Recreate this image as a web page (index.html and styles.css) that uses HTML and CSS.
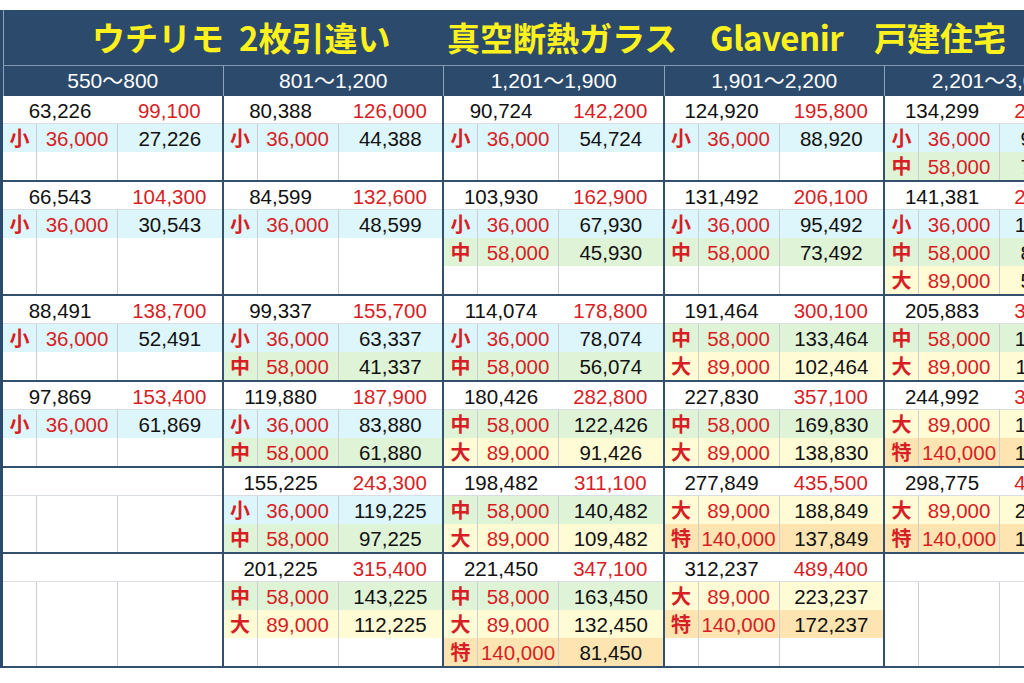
FILE: index.html
```html
<!DOCTYPE html>
<html lang="ja">
<head>
<meta charset="utf-8">
<title>ウチリモ 2枚引違い 真空断熱ガラス Glavenir 戸建住宅</title>
<link rel="stylesheet" href="styles.css">
</head>
<body>
<div class="sheet">
  <div class="title">
    <span class="t1">ウチリモ</span>
    <span class="t2">2枚引違い</span>
    <span class="t3">真空断熱ガラス</span>
    <span class="t4">Glavenir</span>
    <span class="t5">戸建住宅</span>
  </div>
  <div class="heads">
    <div>550～800</div>
    <div>801～1,200</div>
    <div>1,201～1,900</div>
    <div>1,901～2,200</div>
    <div>2,201～3,000</div>
  </div>

  <!-- band 1 -->
  <div class="band">
    <div class="blk">
      <div class="top"><span class="v">63,226</span><span class="p">99,100</span></div>
      <div class="r s"><span class="k">小</span><span class="a">36,000</span><span class="d">27,226</span></div>
      <div class="r"><span></span><span></span><span></span></div>
    </div>
    <div class="blk">
      <div class="top"><span class="v">80,388</span><span class="p">126,000</span></div>
      <div class="r s"><span class="k">小</span><span class="a">36,000</span><span class="d">44,388</span></div>
      <div class="r"><span></span><span></span><span></span></div>
    </div>
    <div class="blk">
      <div class="top"><span class="v">90,724</span><span class="p">142,200</span></div>
      <div class="r s"><span class="k">小</span><span class="a">36,000</span><span class="d">54,724</span></div>
      <div class="r"><span></span><span></span><span></span></div>
    </div>
    <div class="blk">
      <div class="top"><span class="v">124,920</span><span class="p">195,800</span></div>
      <div class="r s"><span class="k">小</span><span class="a">36,000</span><span class="d">88,920</span></div>
      <div class="r"><span></span><span></span><span></span></div>
    </div>
    <div class="blk">
      <div class="top"><span class="v">134,299</span><span class="p">210,500</span></div>
      <div class="r s"><span class="k">小</span><span class="a">36,000</span><span class="d">98,299</span></div>
      <div class="r m"><span class="k">中</span><span class="a">58,000</span><span class="d">76,299</span></div>
    </div>
  </div>

  <!-- band 2 -->
  <div class="band">
    <div class="blk">
      <div class="top"><span class="v">66,543</span><span class="p">104,300</span></div>
      <div class="r s"><span class="k">小</span><span class="a">36,000</span><span class="d">30,543</span></div>
      <div class="r"><span></span><span></span><span></span></div>
      <div class="r"><span></span><span></span><span></span></div>
    </div>
    <div class="blk">
      <div class="top"><span class="v">84,599</span><span class="p">132,600</span></div>
      <div class="r s"><span class="k">小</span><span class="a">36,000</span><span class="d">48,599</span></div>
      <div class="r"><span></span><span></span><span></span></div>
      <div class="r"><span></span><span></span><span></span></div>
    </div>
    <div class="blk">
      <div class="top"><span class="v">103,930</span><span class="p">162,900</span></div>
      <div class="r s"><span class="k">小</span><span class="a">36,000</span><span class="d">67,930</span></div>
      <div class="r m"><span class="k">中</span><span class="a">58,000</span><span class="d">45,930</span></div>
      <div class="r"><span></span><span></span><span></span></div>
    </div>
    <div class="blk">
      <div class="top"><span class="v">131,492</span><span class="p">206,100</span></div>
      <div class="r s"><span class="k">小</span><span class="a">36,000</span><span class="d">95,492</span></div>
      <div class="r m"><span class="k">中</span><span class="a">58,000</span><span class="d">73,492</span></div>
      <div class="r"><span></span><span></span><span></span></div>
    </div>
    <div class="blk">
      <div class="top"><span class="v">141,381</span><span class="p">221,600</span></div>
      <div class="r s"><span class="k">小</span><span class="a">36,000</span><span class="d">105,381</span></div>
      <div class="r m"><span class="k">中</span><span class="a">58,000</span><span class="d">83,381</span></div>
      <div class="r l"><span class="k">大</span><span class="a">89,000</span><span class="d">52,381</span></div>
    </div>
  </div>

  <!-- band 3 -->
  <div class="band">
    <div class="blk">
      <div class="top"><span class="v">88,491</span><span class="p">138,700</span></div>
      <div class="r s"><span class="k">小</span><span class="a">36,000</span><span class="d">52,491</span></div>
      <div class="r"><span></span><span></span><span></span></div>
    </div>
    <div class="blk">
      <div class="top"><span class="v">99,337</span><span class="p">155,700</span></div>
      <div class="r s"><span class="k">小</span><span class="a">36,000</span><span class="d">63,337</span></div>
      <div class="r m"><span class="k">中</span><span class="a">58,000</span><span class="d">41,337</span></div>
    </div>
    <div class="blk">
      <div class="top"><span class="v">114,074</span><span class="p">178,800</span></div>
      <div class="r s"><span class="k">小</span><span class="a">36,000</span><span class="d">78,074</span></div>
      <div class="r m"><span class="k">中</span><span class="a">58,000</span><span class="d">56,074</span></div>
    </div>
    <div class="blk">
      <div class="top"><span class="v">191,464</span><span class="p">300,100</span></div>
      <div class="r m"><span class="k">中</span><span class="a">58,000</span><span class="d">133,464</span></div>
      <div class="r l"><span class="k">大</span><span class="a">89,000</span><span class="d">102,464</span></div>
    </div>
    <div class="blk">
      <div class="top"><span class="v">205,883</span><span class="p">322,700</span></div>
      <div class="r m"><span class="k">中</span><span class="a">58,000</span><span class="d">147,883</span></div>
      <div class="r l"><span class="k">大</span><span class="a">89,000</span><span class="d">116,883</span></div>
    </div>
  </div>

  <!-- band 4 -->
  <div class="band">
    <div class="blk">
      <div class="top"><span class="v">97,869</span><span class="p">153,400</span></div>
      <div class="r s"><span class="k">小</span><span class="a">36,000</span><span class="d">61,869</span></div>
      <div class="r"><span></span><span></span><span></span></div>
    </div>
    <div class="blk">
      <div class="top"><span class="v">119,880</span><span class="p">187,900</span></div>
      <div class="r s"><span class="k">小</span><span class="a">36,000</span><span class="d">83,880</span></div>
      <div class="r m"><span class="k">中</span><span class="a">58,000</span><span class="d">61,880</span></div>
    </div>
    <div class="blk">
      <div class="top"><span class="v">180,426</span><span class="p">282,800</span></div>
      <div class="r m"><span class="k">中</span><span class="a">58,000</span><span class="d">122,426</span></div>
      <div class="r l"><span class="k">大</span><span class="a">89,000</span><span class="d">91,426</span></div>
    </div>
    <div class="blk">
      <div class="top"><span class="v">227,830</span><span class="p">357,100</span></div>
      <div class="r m"><span class="k">中</span><span class="a">58,000</span><span class="d">169,830</span></div>
      <div class="r l"><span class="k">大</span><span class="a">89,000</span><span class="d">138,830</span></div>
    </div>
    <div class="blk">
      <div class="top"><span class="v">244,992</span><span class="p">384,000</span></div>
      <div class="r l"><span class="k">大</span><span class="a">89,000</span><span class="d">155,992</span></div>
      <div class="r x"><span class="k">特</span><span class="a">140,000</span><span class="d">104,992</span></div>
    </div>
  </div>

  <!-- band 5 -->
  <div class="band">
    <div class="blk">
      <div class="top"></div>
      <div class="r"><span></span><span></span><span></span></div>
      <div class="r"><span></span><span></span><span></span></div>
    </div>
    <div class="blk">
      <div class="top"><span class="v">155,225</span><span class="p">243,300</span></div>
      <div class="r s"><span class="k">小</span><span class="a">36,000</span><span class="d">119,225</span></div>
      <div class="r m"><span class="k">中</span><span class="a">58,000</span><span class="d">97,225</span></div>
    </div>
    <div class="blk">
      <div class="top"><span class="v">198,482</span><span class="p">311,100</span></div>
      <div class="r m"><span class="k">中</span><span class="a">58,000</span><span class="d">140,482</span></div>
      <div class="r l"><span class="k">大</span><span class="a">89,000</span><span class="d">109,482</span></div>
    </div>
    <div class="blk">
      <div class="top"><span class="v">277,849</span><span class="p">435,500</span></div>
      <div class="r l"><span class="k">大</span><span class="a">89,000</span><span class="d">188,849</span></div>
      <div class="r x"><span class="k">特</span><span class="a">140,000</span><span class="d">137,849</span></div>
    </div>
    <div class="blk">
      <div class="top"><span class="v">298,775</span><span class="p">468,300</span></div>
      <div class="r l"><span class="k">大</span><span class="a">89,000</span><span class="d">209,775</span></div>
      <div class="r x"><span class="k">特</span><span class="a">140,000</span><span class="d">158,775</span></div>
    </div>
  </div>

  <!-- band 6 -->
  <div class="band">
    <div class="blk">
      <div class="top"></div>
      <div class="r"><span></span><span></span><span></span></div>
      <div class="r"><span></span><span></span><span></span></div>
      <div class="r"><span></span><span></span><span></span></div>
    </div>
    <div class="blk">
      <div class="top"><span class="v">201,225</span><span class="p">315,400</span></div>
      <div class="r m"><span class="k">中</span><span class="a">58,000</span><span class="d">143,225</span></div>
      <div class="r l"><span class="k">大</span><span class="a">89,000</span><span class="d">112,225</span></div>
      <div class="r"><span></span><span></span><span></span></div>
    </div>
    <div class="blk">
      <div class="top"><span class="v">221,450</span><span class="p">347,100</span></div>
      <div class="r m"><span class="k">中</span><span class="a">58,000</span><span class="d">163,450</span></div>
      <div class="r l"><span class="k">大</span><span class="a">89,000</span><span class="d">132,450</span></div>
      <div class="r x"><span class="k">特</span><span class="a">140,000</span><span class="d">81,450</span></div>
    </div>
    <div class="blk">
      <div class="top"><span class="v">312,237</span><span class="p">489,400</span></div>
      <div class="r l"><span class="k">大</span><span class="a">89,000</span><span class="d">223,237</span></div>
      <div class="r x"><span class="k">特</span><span class="a">140,000</span><span class="d">172,237</span></div>
      <div class="r"><span></span><span></span><span></span></div>
    </div>
    <div class="blk">
      <div class="top"></div>
      <div class="r"><span></span><span></span><span></span></div>
      <div class="r"><span></span><span></span><span></span></div>
      <div class="r"><span></span><span></span><span></span></div>
    </div>
  </div>
</div>
</body>
</html>
```

FILE: styles.css
```css
html, body {
  margin: 0;
  padding: 0;
  background: #ffffff;
  overflow: hidden;
}

body {
  font-family: "Liberation Sans", "Noto Sans CJK JP", sans-serif;
  color: #111111;
}

.sheet {
  margin-top: 10px;
  width: 1108px;
  border-left: 3px solid #2c4a6c;
}

/* ---------- title ---------- */
.title {
  display: flex;
  align-items: center;
  height: 56px;
  box-sizing: border-box;
  background: #2c4a6c;
  border-bottom: 1px solid #8397ad;
  box-shadow: inset 1px 0 0 #8fa3b8;
  color: #fff21c;
  font-family: "Noto Sans CJK JP", sans-serif;
  font-weight: 700;
  font-size: 33px;
  line-height: 1;
  white-space: nowrap;
}

.title span {
  flex: none;
}

.t1 { margin-left: 89px; width: 147px; }
.t2 { width: 208px; }
.t3 { width: 263px; }
.t4 { width: 164px; letter-spacing: -0.5px; }
.t5 { width: 160px; }

/* ---------- size headers ---------- */
.heads {
  display: flex;
  height: 30px;
  background: #2c4a6c;
  box-shadow: inset 1px 0 0 #8fa3b8;
}

.heads div {
  flex: none;
  width: 220.5px;
  box-sizing: border-box;
  border-right: 1px solid #8fa3b8;
  color: #ffffff;
  font-size: 21px;
  line-height: 30px;
  text-align: center;
  white-space: nowrap;
}

/* ---------- bands ---------- */
.band {
  display: flex;
  border-bottom: 2px solid #34506d;
}

.blk {
  flex: none;
  width: 220.5px;
  box-sizing: border-box;
  border-right: 2px solid #34506d;
}

.top,
.r {
  height: 28px;
  font-size: 20.5px;
  white-space: nowrap;
}

.top {
  display: grid;
  grid-template-columns: 114px 1fr;
  grid-template-rows: 27px;
  box-sizing: border-box;
  border-bottom: 1px solid #d9dee4;
}

.top span,
.r span {
  box-sizing: border-box;
  padding-top: 2px;
  line-height: 25px;
  text-align: center;
}

.r span {
  line-height: 26px;
}

.v { color: #111111; }
.p { color: #d81e25; }

.r {
  display: grid;
  grid-template-columns: 33px 81px 1fr;
  grid-template-rows: 28px;
}

.r span + span {
  border-left: 1px solid #cbcfd4;
}

.r .k {
  color: #d81e25;
  font-family: "Noto Sans CJK JP", sans-serif;
  font-weight: 700;
  font-size: 20px;
  padding-top: 0;
  line-height: 28px;
}

.a { color: #d81e25; }
.d { color: #111111; }

/* row tints */
.s { background: #dcf6fb; }
.m { background: #dff4d6; }
.l { background: #fffbd4; }
.x { background: #fde4b0; }
```
